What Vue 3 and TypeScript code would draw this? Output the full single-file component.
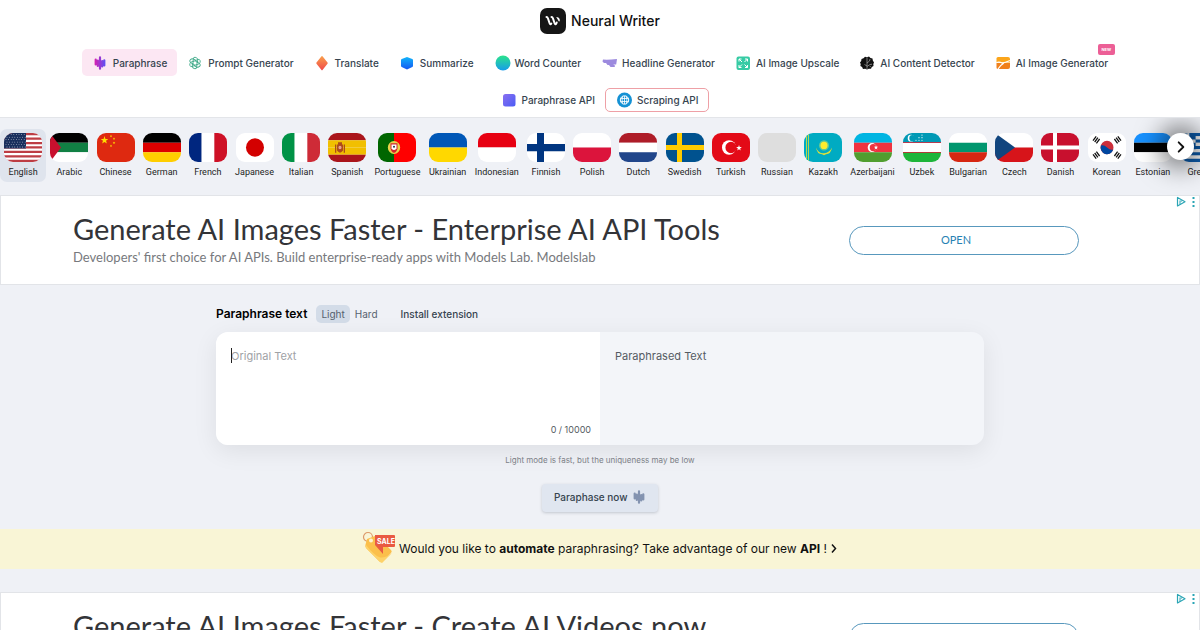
<script setup lang="ts">
import { ref } from 'vue'

type Shape = [d: string, fill: string]

interface Tool {
  name: string
  icon: string
  active?: boolean
  outlined?: boolean
  badge?: string
}

interface Language {
  name: string
  shapes: Shape[]
}

const tools: Tool[][] = [
  [
    { name: 'Paraphrase', icon: 'wave', active: true },
    { name: 'Prompt Generator', icon: 'knot' },
    { name: 'Translate', icon: 'diamond' },
    { name: 'Summarize', icon: 'hexagon' },
    { name: 'Word Counter', icon: 'circle' },
    { name: 'Headline Generator', icon: 'headline' },
    { name: 'AI Image Upscale', icon: 'upscale' },
    { name: 'AI Content Detector', icon: 'brain' },
    { name: 'AI Image Generator', icon: 'image', badge: 'NEW' },
  ],
  [
    { name: 'Paraphrase API', icon: 'square' },
    { name: 'Scraping API', icon: 'globe', outlined: true },
  ],
]

const pill = (x: number, top: number, bottom: number) =>
  `M${x} ${top + 1.1}a1.1 1.1 0 0 1 2.2 0V${bottom - 1.1}a1.1 1.1 0 0 1 -2.2 0z`
const wave = pill(3.6, 4.5, 11.5) + pill(5.7, 5.5, 13) + pill(7.9, 2.3, 15.8) + pill(10.1, 6, 13.5) + pill(12.2, 5.2, 12.5)

const box = (x: number, y: number, w: number, h: number) => `M${x} ${y}h${w}v${h}h${-w}z`
const disc = (x: number, y: number, r: number) =>
  `M${x - r} ${y}a${r} ${r} 0 1 0 ${2 * r} 0a${r} ${r} 0 1 0 ${-2 * r} 0z`

function rows(...colors: string[]): Shape[] {
  const h = 28 / colors.length
  return colors.map((c, i) => [box(0, i * h, 38, h), c])
}

function columns(...colors: string[]): Shape[] {
  const w = 38 / colors.length
  return colors.map((c, i) => [box(i * w, 0, w, 28), c])
}

function cross(back: string, front: string, x: number, size: number): Shape[] {
  return [
    [box(0, 0, 38, 28), back],
    [box(x, 0, size, 28) + box(0, 14 - size / 2, 38, size), front],
  ]
}

function star(cx: number, cy: number, r: number): string {
  let d = ''
  for (let i = 0; i < 10; i++) {
    const a = (i * Math.PI) / 5 - Math.PI / 2
    const q = i % 2 ? r * 0.4 : r
    d += `${i ? 'L' : 'M'}${(cx + q * Math.cos(a)).toFixed(2)} ${(cy + q * Math.sin(a)).toFixed(2)}`
  }
  return d + 'z'
}

function usa(): Shape[] {
  const out: Shape[] = [[box(0, 0, 38, 28), '#fff']]
  for (let i = 0; i < 7; i++) out.push([box(0, i * 4.3, 38, 2.15), '#bd3d44'])
  out.push([box(0, 0, 22, 15), '#192f5d'])
  for (let y = 0; y < 6; y++)
    for (let x = 0; x < 8; x++) out.push([disc(2 + x * 2.6 + (y % 2), 1.6 + y * 2.4, 0.45), '#fff'])
  return out
}

const languages: Language[] = [
  { name: 'English', shapes: usa() },
  { name: 'Arabic', shapes: [...rows('#000', '#118044', '#fff'), ['M0 0L11 14L0 28z', '#c8102e']] },
  {
    name: 'Chinese',
    shapes: [
      [box(0, 0, 38, 28), '#de2910'],
      [star(7.5, 7, 4) + star(14, 3, 1.4) + star(17, 5.5, 1.4) + star(17, 9.5, 1.4) + star(14, 12.5, 1.4), '#ffde00'],
    ],
  },
  { name: 'German', shapes: rows('#000', '#d00', '#ffce00') },
  { name: 'French', shapes: columns('#00267f', '#fff', '#ce1126') },
  { name: 'Japanese', shapes: [[box(0, 0, 38, 28), '#fff'], [disc(19, 14, 9), '#d30000']] },
  { name: 'Italian', shapes: columns('#009246', '#fff', '#ce2b37') },
  {
    name: 'Spanish',
    shapes: [
      ...rows('#aa151b', '#f1bf00', '#f1bf00', '#aa151b'),
      ['M9 11h6v6q-3 4-6 0zM7 11h1.300v8H7zM15.700 11H17v8h-1.300zM10 9h4v2h-4z', '#ad4b1b'],
      [disc(12, 14, 1.6), '#e8a090'],
    ],
  },
  {
    name: 'Portuguese',
    shapes: [
      [box(0, 0, 16, 28), '#006600'],
      [box(16, 0, 22, 28), '#f00'],
      [disc(16, 14, 6.2), '#e8d34a'],
      ['M12.500 10h7v5q-1 4-3.500 4t-3.500-4z', '#d5222c'],
      ['M13.500 11h5v4q-2.500 3-5 0z', '#fff'],
      [disc(16, 13.3, 1), '#234'],
    ],
  },
  { name: 'Ukrainian', shapes: rows('#0057b7', '#ffd800') },
  { name: 'Indonesian', shapes: rows('#e70011', '#fff') },
  { name: 'Finnish', shapes: cross('#fff', '#003580', 10, 7) },
  { name: 'Polish', shapes: rows('#fff', '#dc143c') },
  { name: 'Dutch', shapes: rows('#ae1c28', '#fff', '#21468b') },
  { name: 'Swedish', shapes: cross('#00528f', '#fecb00', 11, 5) },
  {
    name: 'Turkish',
    shapes: [
      [box(0, 0, 38, 28), '#e30a17'],
      [disc(17, 14, 7), '#fff'],
      [disc(19, 14, 5.6), '#e30a17'],
      [star(27, 14.5, 3), '#fff'],
    ],
  },
  { name: 'Russian', shapes: [[box(0, 0, 38, 28), '#dedede']] },
  {
    name: 'Kazakh',
    shapes: [
      [box(0, 0, 38, 28), '#00abc2'],
      [box(2, 0, 1, 28) + box(4, 0, 1, 28), '#b5d84e'],
      [disc(20, 12, 5), '#66c890'],
      [disc(20, 12, 3.5), '#ffec2d'],
      ['M12 14q2.500 6 8 5.500t8-5.500q-1 6.500-6 6.500l-2 1-2-1q-5 0-6-6.500z', '#d8df3d'],
    ],
  },
  {
    name: 'Azerbaijani',
    shapes: [...rows('#00b5e2', '#ef3340', '#509e2f'), [disc(18, 14, 4.3), '#fff'], [disc(19.2, 14, 3.5), '#ef3340'], [star(22, 14, 2.3), '#fff']],
  },
  {
    name: 'Uzbek',
    shapes: [
      ...rows('#0099b5', '#fff', '#1eb53a'),
      [disc(8, 5, 3.3), '#fff'],
      [disc(9.3, 5, 3), '#0099b5'],
      [[13, 16, 19].map((x) => disc(x, 7, 0.6)).join('') + [16, 19].map((x) => disc(x, 4.5, 0.6)).join('') + disc(19, 2, 0.6), '#fff'],
      [box(0, 9, 38, 0.7) + box(0, 18.5, 38, 0.7), '#ce1126'],
    ],
  },
  { name: 'Bulgarian', shapes: rows('#fff', '#00966e', '#d62612') },
  { name: 'Czech', shapes: [...rows('#fff', '#d7141a'), ['M0 0L20 14L0 28z', '#11457e']] },
  { name: 'Danish', shapes: cross('#c8102e', '#fff', 12, 4) },
  {
    name: 'Korean',
    shapes: [
      [box(0, 0, 38, 28), '#fff'],
      [disc(19, 14, 6.5), '#cd2e3a'],
      ['M12.900 12a6.500 6.500 0 1 0 12.400 4q-3 1-6.200-2t-6.200-2z', '#0047a0'],
      [
        'M4.500 7l3.200-4.200 1 .8-3.200 4.200zM6.200 8.300l3.200-4.200 1 .8-3.200 4.200zM7.900 9.600l3.200-4.200 1 .8-3.200 4.200z' +
          'M33.500 7l-3.200-4.200-1 .8 3.200 4.200zM31.800 8.300l-3.200-4.200-1 .8 3.200 4.200zM30.100 9.600l-3.200-4.200-1 .8 3.200 4.200z' +
          'M4.500 21l3.200 4.200 1-.8-3.200-4.200zM6.200 19.700l3.200 4.200 1-.8-3.200-4.200zM7.900 18.400l3.200 4.200 1-.8-3.200-4.200z' +
          'M33.500 21l-3.200 4.200-1-.8 3.200-4.200zM31.800 19.700l-3.200 4.200-1-.8 3.200-4.200zM30.100 18.400l-3.200 4.200-1-.8 3.200-4.200z',
        '#111',
      ],
    ],
  },
  { name: 'Estonian', shapes: rows('#1791ff', '#000', '#fff') },
  {
    name: 'Greek',
    shapes: [
      ...rows('#0d5eaf', '#fff', '#0d5eaf', '#fff', '#0d5eaf', '#fff', '#0d5eaf', '#fff', '#0d5eaf'),
      [box(0, 0, 15.6, 15.6), '#0d5eaf'],
      [box(6.2, 0, 3.1, 15.6) + box(0, 6.2, 15.6, 3.1), '#fff'],
    ],
  },
]

const ads = [
  {
    title: 'Generate AI Images Faster - Enterprise AI API Tools',
    text: "Developers' first choice for AI APIs. Build enterprise-ready apps with Models Lab. Modelslab",
  },
  { title: 'Generate AI Images Faster - Create AI Videos now', text: '' },
]

const modes = ['Light', 'Hard']
const mode = ref('Light')
const language = ref('English')
const source = ref('')
</script>

<template>
  <div class="page">
    <header class="header">
      <a class="logo" href="#">
        <svg width="26" height="26" viewBox="0 0 26 26" aria-hidden="true">
          <rect width="26" height="26" rx="7" fill="#161616" />
          <path d="M6.500 9q1 0 1.500 1.500l1.500 4.500q.8 2.200 1.800.5" fill="none" stroke="#fff" stroke-width="2" stroke-linecap="round" />
          <path d="M11.500 9q1 0 1.500 1.500l1.500 4.500q.8 2.200 1.800.5l.4-1" fill="none" stroke="#fff" stroke-width="2" stroke-linecap="round" />
          <path d="M16.200 8.900q3.300.1 3.600 3.100l-.2 1.300q-.8.500-1.300-.8z" fill="#fff" />
        </svg>
        <span>Neural Writer</span>
      </a>
      <nav class="nav" aria-label="Tools">
        <div v-for="(row, r) in tools" :key="r" class="nav-row">
          <a v-for="tool in row" :key="tool.name" href="#" class="tool" :class="{ active: tool.active, outlined: tool.outlined }">
            <svg class="tool-icon" viewBox="0 0 18 18" aria-hidden="true">
              <defs>
                <linearGradient id="g-wave"><stop stop-color="#d61fb0" /><stop offset="1" stop-color="#5b52f5" /></linearGradient>
                <linearGradient id="g-diamond" x2="0" y2="1"><stop stop-color="#f9a04c" /><stop offset="1" stop-color="#f04a4a" /></linearGradient>
                <linearGradient id="g-hex" x2="0" y2="1"><stop stop-color="#10b4fb" /><stop offset="1" stop-color="#1557f2" /></linearGradient>
                <linearGradient id="g-circle" x2="0" y2="1"><stop stop-color="#2be38b" /><stop offset="1" stop-color="#179cea" /></linearGradient>
                <linearGradient id="g-square" x2="1" y2="1"><stop stop-color="#8a70f0" /><stop offset="1" stop-color="#4a5cf5" /></linearGradient>
              </defs>
              <path v-if="tool.icon === 'wave'" :d="wave" fill="url(#g-wave)" />
              <g v-else-if="tool.icon === 'knot'" fill="none" stroke="#43ab8b" stroke-width=".9">
                <path v-for="n in 6" :key="n" :transform="`rotate(${n * 60} 9 9)`" d="M9 7l2.500-1.500q2.200-.8 2.700 1.300t-1.300 3L11 11V8.200" />
              </g>
              <path v-else-if="tool.icon === 'diamond'" d="M8.300 2.500q.7-1 1.400 0l4.800 6q.5.600 0 1.200l-4.800 6q-.7 1-1.400 0l-4.800-6q-.5-.6 0-1.200z" fill="url(#g-diamond)" />
              <path v-else-if="tool.icon === 'hexagon'" d="M9 3l5.300 2q.7.300.7 1v6q0 .7-.7 1.100L9 15.500l-5.300-2.400Q3 12.700 3 12V6q0-.7.7-1z" fill="url(#g-hex)" />
              <circle v-else-if="tool.icon === 'circle'" cx="10" cy="9" r="7.500" fill="url(#g-circle)" />
              <path v-else-if="tool.icon === 'headline'" d="M3 5.500q5 .5 14-.5l-.8 5.500h-3l2 1.200-.7 1.300h-4l-1.500-2H7.500L6 9H4L2.500 7.500z" fill="#9c8ade" />
              <g v-else-if="tool.icon === 'upscale'">
                <rect x="2.500" y="2.500" width="13.500" height="13.500" rx="2" fill="#37cba4" />
                <path d="M5 7.500V5h2.500M5 5l3 3M11 5h2.500v2.500M13.500 5l-3 3M5 11v2.500h2.500M5 13.500l3-3M13.500 11v2.500H11M13.500 13.500l-3-3" stroke="#fff" fill="none" />
              </g>
              <g v-else-if="tool.icon === 'brain'">
                <path d="M7 2.700l2 .5 2-.6 1.500 1.300 2 .7.300 2 1.200 1.800-.7 1.600.2 2-1.700 1-.8 1.700-2.200.1L9 15.600l-1.800-.8-2.200.100-.9-1.800-1.700-1.200.3-2L2 8.500l1.200-1.600L3.500 5l2-.7z" fill="#111" />
                <path d="M9 3.500v11.500M9 12l-2.500-1.500M9 9l2.500-2 .5-2M9 12.500l3-2 2-.3M12 13l.5-1" stroke="#aaa" stroke-width=".7" fill="none" />
              </g>
              <g v-else-if="tool.icon === 'image'">
                <path d="M4 3h10q2 0 2 2v3.500H2.500V4.500Q2.500 3 4 3z" fill="#fba51b" />
                <path d="M2.500 9H16v4q0 2-2 2H4q-1.500 0-1.500-1.500z" fill="#f0801c" />
                <path d="M2.500 8.500q3-1 5.500.5 3-.3 8-2.500M4 15q2.500-4 6-6" stroke="#fff" stroke-width="1.200" fill="none" />
              </g>
              <rect v-else-if="tool.icon === 'square'" x="3" y="3" width="12.500" height="12.500" rx="2.500" fill="url(#g-square)" />
              <g v-else>
                <circle cx="9.500" cy="9" r="7.500" fill="#1491d4" />
                <circle cx="9.500" cy="9" r="4.200" fill="none" stroke="#fff" stroke-width="1" />
                <path d="M5.300 7.500h8.400M5.300 10.500h8.400M9.500 5v8M7.600 5.500q-1 3.500 0 7M11.400 5.500q1 3.500 0 7" stroke="#fff" stroke-width=".8" fill="none" />
              </g>
            </svg>
            <span>{{ tool.name }}</span>
            <span v-if="tool.badge" class="badge">{{ tool.badge }}</span>
          </a>
        </div>
      </nav>
    </header>

    <section class="languages" aria-label="Languages">
      <div class="language-list">
        <button v-for="item in languages" :key="item.name" type="button" class="language" :class="{ selected: item.name === language }" @click="language = item.name">
          <svg class="flag" viewBox="0 0 38 28" preserveAspectRatio="none" aria-hidden="true">
            <path v-for="(shape, i) in item.shapes" :key="i" :d="shape[0]" :fill="shape[1]" />
          </svg>
          <span>{{ item.name }}</span>
        </button>
      </div>
      <button type="button" class="next" aria-label="More languages">
        <svg width="12" height="14" viewBox="0 0 10 12"><path d="M3 2l4 4-4 4" fill="none" stroke="#111" stroke-width="1.600" stroke-linecap="round" stroke-linejoin="round" /></svg>
      </button>
    </section>

    <template v-for="(ad, n) in ads" :key="n">
      <aside class="ad" aria-label="Advertisement">
        <div class="ad-copy">
          <a class="ad-title" href="#">{{ ad.title }}</a>
          <p v-if="ad.text">{{ ad.text }}</p>
        </div>
        <a class="ad-open" href="#">{{ n === 0 ? 'OPEN' : '' }}</a>
        <svg class="ad-mark" width="20" height="12" viewBox="0 0 20 12" aria-hidden="true">
          <path d="M1.500 1.500v8.500L9 5.800z" fill="none" stroke="#2aa5b5" stroke-width="1.200" stroke-linejoin="round" />
          <path d="M4 4.500v4M4.500 5h1.500" stroke="#2aa5b5" fill="none" />
          <path d="M16.500 1h2v2h-2zM16.500 5h2v2h-2zM16.500 9h2v2h-2z" fill="#2aa5b5" />
        </svg>
      </aside>

      <template v-if="n === 0">
        <main class="editor">
          <div class="editor-head">
            <h1>Paraphrase text</h1>
            <div class="modes">
              <button v-for="m in modes" :key="m" type="button" :class="{ on: m === mode }" @click="mode = m">{{ m }}</button>
            </div>
            <a href="#" class="extension">Install extension</a>
          </div>
          <div class="panes">
            <div class="pane source">
              <span class="caret"></span>
              <textarea v-model="source" aria-label="Original Text" placeholder="Original Text"></textarea>
              <span class="count">{{ source.length }} / 10000</span>
            </div>
            <div class="pane result">Paraphrased Text</div>
          </div>
          <p class="hint">Light mode is fast, but the uniqueness may be low</p>
          <button type="button" class="submit">
            Paraphase now
            <svg width="18" height="18" viewBox="0 0 18 18" aria-hidden="true"><path :d="wave" fill="#8393b0" /></svg>
          </button>
        </main>

        <a class="promo" href="#">
          <svg width="34" height="34" viewBox="0 0 34 34" aria-hidden="true">
            <circle cx="6" cy="6" r="4.500" fill="none" stroke="#dc9a6a" stroke-width="1.200" />
            <path d="M5 8l8-3q2-.5 3 1l13 13q1.500 1.500 0 3l-8.500 8.500q-1.500 1.500-3 0L4 17q-1-1-.6-3z" fill="#fbbf4b" />
            <path d="M4 17l14 14 2 1 10-10q-8 6-13 4T4 14z" fill="#fdd268" />
            <circle cx="9" cy="9.500" r="2" fill="#fff3d0" />
            <path d="M13 4h19q1 0 1 1v10q0 1-1 1H21v7L13 14z" fill="#e95a42" />
            <text x="15" y="13">SALE</text>
          </svg>
          <span>Would you like to <b>automate</b> paraphrasing? Take advantage of our new <b>API</b> !</span>
          <svg width="8" height="12" viewBox="0 0 8 12" aria-hidden="true"><path d="M2 2.500L5.500 6.500 2 10.500" fill="none" stroke="#111" stroke-width="1.500" /></svg>
        </a>
      </template>
    </template>
  </div>
</template>

<style>
body {
  background: #eff1f6;
}
</style>

<style scoped>
* {
  box-sizing: border-box;
}
.page {
  height: 100vh;
  overflow: hidden;
  background: #eff1f6;
  color: #111;
  font-family: Inter, 'Liberation Sans', sans-serif;
}
a {
  color: inherit;
  text-decoration: none;
}
button {
  border: 0;
  padding: 0;
  background: none;
  font: inherit;
  color: inherit;
  cursor: pointer;
}
.header {
  background: #fff;
  border-bottom: 1px solid #e3e5e9;
  padding: 8px 0 4px;
}
.logo {
  display: flex;
  justify-content: center;
  align-items: center;
  gap: 5px;
  font-size: 14px;
  line-height: 26px;
  font-weight: 500;
}
.nav {
  margin-top: 15px;
  display: grid;
  gap: 10px;
}
.nav-row {
  display: flex;
  justify-content: center;
  align-items: center;
}
.tool {
  position: relative;
  display: flex;
  align-items: center;
  gap: 4px;
  height: 27px;
  padding: 0 10px 0 9px;
  border-radius: 5px;
  font-size: 10px;
  font-weight: 500;
  color: #36444f;
  white-space: nowrap;
}
.tool.active {
  background: #fce7f3;
}
.tool.outlined {
  height: 24px;
  border: 1px solid #eea0a6;
}
.tool-icon {
  width: 18px;
  height: 18px;
}
.badge {
  position: absolute;
  right: 3px;
  top: -5px;
  padding: 0 4px;
  border-radius: 2px;
  background: #ec5f96;
  color: #fff;
  font-size: 4px;
  line-height: 11px;
  font-weight: 700;
}
.languages {
  position: relative;
  height: 77px;
  padding-top: 11px;
  overflow: hidden;
}
.language-list {
  display: flex;
  width: calc(100% + 22px);
}
.language {
  flex: 1 1 0;
  display: flex;
  flex-direction: column;
  align-items: center;
  padding: 4px 4px 3px;
  border-radius: 7px;
  font-family: Roboto, sans-serif;
  font-size: 9px;
  line-height: 14px;
  white-space: nowrap;
  color: #1c1e24;
}
.language.selected {
  background: #dfe4ed;
}
.flag {
  width: 38px;
  height: 29px;
  margin-bottom: 3px;
  border-radius: 9px;
}
.next {
  position: absolute;
  right: 6px;
  top: 15px;
  width: 27px;
  height: 27px;
  display: grid;
  place-items: center;
  border-radius: 50%;
  background: #fff;
  box-shadow: 0 0 24px 8px rgba(0, 0, 0, 0.5);
}
.ad {
  position: relative;
  display: flex;
  align-items: flex-start;
  min-height: 90px;
  padding: 15px 10% 0 6%;
  border: 1px solid #e2e4e8;
  background: #fff;
  font-family: Lato, 'Open Sans', sans-serif;
}
.ad-copy {
  flex: 1;
  white-space: nowrap;
}
.ad-title {
  display: block;
  font-size: 29px;
  line-height: 36px;
  color: #333438;
}
.ad-copy p {
  margin: 1px 0 0;
  font-size: 13px;
  line-height: 18px;
  color: #77797d;
}
.ad-open {
  width: 230px;
  height: 29px;
  margin-top: 15px;
  padding-right: 16px;
  border: 1px solid #5898bd;
  border-radius: 15px;
  text-align: center;
  font-size: 11px;
  line-height: 26px;
  color: #2682b3;
}
.ad-mark {
  position: absolute;
  top: 0;
  right: 3px;
}
.editor {
  width: 64%;
  margin: 0 auto;
  padding: 19px 0 17px;
  display: flex;
  flex-direction: column;
  align-items: center;
}
.editor-head {
  align-self: stretch;
  display: flex;
  align-items: center;
  height: 19px;
  font-size: 10px;
  color: #36444f;
}
.editor-head h1 {
  margin: 0 9px 0 0;
  font-size: 12px;
  font-weight: 600;
  color: #000;
}
.modes {
  display: flex;
}
.modes button {
  height: 18px;
  padding: 0 5px;
  border-radius: 5px;
  color: #56616e;
}
.modes .on {
  background: #d3dce8;
}
.extension {
  margin-left: 18px;
  font-weight: 500;
}
.panes {
  align-self: stretch;
  display: grid;
  grid-template-columns: 1fr 1fr;
  min-height: 113px;
  margin-top: 9px;
  border-radius: 12px;
  background: #f3f5f9;
  box-shadow: 0 6px 24px rgba(0, 0, 0, 0.08);
  font-size: 11px;
  line-height: 16px;
}
.pane {
  padding: 16px 15px 8px;
  color: #555b63;
}
.source {
  position: relative;
  display: flex;
  flex-direction: column;
  border-radius: 12px 0 0 12px;
  background: #fff;
}
.source textarea {
  flex: 1;
  width: 100%;
  border: 0;
  padding: 0;
  outline: 0;
  resize: none;
  background: none;
  font: inherit;
}
.source textarea::placeholder {
  color: #a0a2a6;
}
.caret {
  position: absolute;
  left: 15px;
  top: 16px;
  width: 1px;
  height: 15px;
  background: #222;
}
.count {
  align-self: flex-end;
  margin-right: -6px;
  font-size: 9px;
  line-height: 14px;
}
.hint {
  margin: 9px 0 0;
  font-size: 8px;
  line-height: 12px;
  color: #7c7f87;
}
.submit {
  display: flex;
  align-items: center;
  justify-content: space-between;
  width: 116px;
  height: 28px;
  margin-top: 18px;
  padding: 0 10px 2px 12px;
  border-radius: 4px;
  background: #e0e6f0;
  box-shadow: 0 1px 3px rgba(60, 70, 90, 0.25);
  font-size: 10px;
  font-weight: 500;
  white-space: nowrap;
  color: #36444f;
}
.promo {
  display: flex;
  align-items: center;
  justify-content: center;
  gap: 3px;
  height: 40px;
  margin-bottom: 23px;
  padding-bottom: 2px;
  background: #f9f5d6;
  font-size: 12px;
  color: #111;
}
.promo text {
  fill: #fff;
  font-size: 7px;
  font-weight: 700;
}
.promo b {
  font-weight: 700;
}
</style>
